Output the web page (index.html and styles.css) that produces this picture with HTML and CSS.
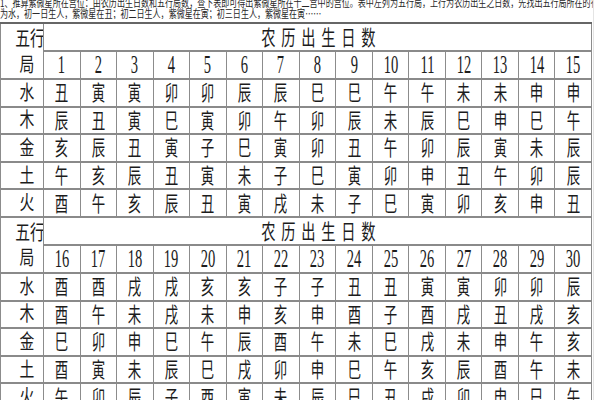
FILE: index.html
```html
<!DOCTYPE html>
<html lang="zh-CN">
<head>
<meta charset="utf-8">
<title>紫微星所在宫位表</title>
<link rel="stylesheet" href="styles.css">
</head>
<body>
<div class="page">
  <div class="note">
    <div class="note-inner">
      <div class="note-line">1、推算紫微星所在宫位：由农历出生日数和五行局数，查下表即可得出紫微星所在十二宫中的宫位。表中左列为五行局，上行为农历出生之日数，先找出五行局所在的行，再对照出生日数所在的列，例如五行局</div>
      <div class="note-line">为水，初一日生人，紫微星在丑；初二日生人，紫微星在寅；初三日生人，紫微星在寅……</div>
    </div>
  </div>
  <table class="grid">
    <colgroup>
      <col class="col-lbl">
      <col><col><col><col><col><col><col><col><col><col><col><col><col><col><col>
    </colgroup>
    <tbody>
      <tr class="head"><th class="lbl"><span class="lt">五行</span></th><th class="title" colspan="15"><span class="tt">农历出生日数</span></th></tr>
      <tr class="nums"><th class="lbl sub"><span class="lt">局</span></th><td><span class="n">1</span></td><td><span class="n">2</span></td><td><span class="n">3</span></td><td><span class="n">4</span></td><td><span class="n">5</span></td><td><span class="n">6</span></td><td><span class="n">7</span></td><td><span class="n">8</span></td><td><span class="n">9</span></td><td><span class="n">10</span></td><td><span class="n">11</span></td><td><span class="n">12</span></td><td><span class="n">13</span></td><td><span class="n">14</span></td><td><span class="n">15</span></td></tr>
      <tr class="row"><th class="lbl"><span class="lt">水</span></th><td><span class="c">丑</span></td><td><span class="c">寅</span></td><td><span class="c">寅</span></td><td><span class="c">卯</span></td><td><span class="c">卯</span></td><td><span class="c">辰</span></td><td><span class="c">辰</span></td><td><span class="c">巳</span></td><td><span class="c">巳</span></td><td><span class="c">午</span></td><td><span class="c">午</span></td><td><span class="c">未</span></td><td><span class="c">未</span></td><td><span class="c">申</span></td><td><span class="c">申</span></td></tr>
      <tr class="row"><th class="lbl"><span class="lt">木</span></th><td><span class="c">辰</span></td><td><span class="c">丑</span></td><td><span class="c">寅</span></td><td><span class="c">巳</span></td><td><span class="c">寅</span></td><td><span class="c">卯</span></td><td><span class="c">午</span></td><td><span class="c">卯</span></td><td><span class="c">辰</span></td><td><span class="c">未</span></td><td><span class="c">辰</span></td><td><span class="c">巳</span></td><td><span class="c">申</span></td><td><span class="c">巳</span></td><td><span class="c">午</span></td></tr>
      <tr class="row"><th class="lbl"><span class="lt">金</span></th><td><span class="c">亥</span></td><td><span class="c">辰</span></td><td><span class="c">丑</span></td><td><span class="c">寅</span></td><td><span class="c">子</span></td><td><span class="c">巳</span></td><td><span class="c">寅</span></td><td><span class="c">卯</span></td><td><span class="c">丑</span></td><td><span class="c">午</span></td><td><span class="c">卯</span></td><td><span class="c">辰</span></td><td><span class="c">寅</span></td><td><span class="c">未</span></td><td><span class="c">辰</span></td></tr>
      <tr class="row"><th class="lbl"><span class="lt">土</span></th><td><span class="c">午</span></td><td><span class="c">亥</span></td><td><span class="c">辰</span></td><td><span class="c">丑</span></td><td><span class="c">寅</span></td><td><span class="c">未</span></td><td><span class="c">子</span></td><td><span class="c">巳</span></td><td><span class="c">寅</span></td><td><span class="c">卯</span></td><td><span class="c">申</span></td><td><span class="c">丑</span></td><td><span class="c">午</span></td><td><span class="c">卯</span></td><td><span class="c">辰</span></td></tr>
      <tr class="row"><th class="lbl"><span class="lt">火</span></th><td><span class="c">酉</span></td><td><span class="c">午</span></td><td><span class="c">亥</span></td><td><span class="c">辰</span></td><td><span class="c">丑</span></td><td><span class="c">寅</span></td><td><span class="c">戌</span></td><td><span class="c">未</span></td><td><span class="c">子</span></td><td><span class="c">巳</span></td><td><span class="c">寅</span></td><td><span class="c">卯</span></td><td><span class="c">亥</span></td><td><span class="c">申</span></td><td><span class="c">丑</span></td></tr>

      <tr class="head"><th class="lbl"><span class="lt">五行</span></th><th class="title" colspan="15"><span class="tt">农历出生日数</span></th></tr>
      <tr class="nums"><th class="lbl sub"><span class="lt">局</span></th><td><span class="n">16</span></td><td><span class="n">17</span></td><td><span class="n">18</span></td><td><span class="n">19</span></td><td><span class="n">20</span></td><td><span class="n">21</span></td><td><span class="n">22</span></td><td><span class="n">23</span></td><td><span class="n">24</span></td><td><span class="n">25</span></td><td><span class="n">26</span></td><td><span class="n">27</span></td><td><span class="n">28</span></td><td><span class="n">29</span></td><td><span class="n">30</span></td></tr>
      <tr class="row"><th class="lbl"><span class="lt">水</span></th><td><span class="c">酉</span></td><td><span class="c">酉</span></td><td><span class="c">戌</span></td><td><span class="c">戌</span></td><td><span class="c">亥</span></td><td><span class="c">亥</span></td><td><span class="c">子</span></td><td><span class="c">子</span></td><td><span class="c">丑</span></td><td><span class="c">丑</span></td><td><span class="c">寅</span></td><td><span class="c">寅</span></td><td><span class="c">卯</span></td><td><span class="c">卯</span></td><td><span class="c">辰</span></td></tr>
      <tr class="row"><th class="lbl"><span class="lt">木</span></th><td><span class="c">酉</span></td><td><span class="c">午</span></td><td><span class="c">未</span></td><td><span class="c">戌</span></td><td><span class="c">未</span></td><td><span class="c">申</span></td><td><span class="c">亥</span></td><td><span class="c">申</span></td><td><span class="c">酉</span></td><td><span class="c">子</span></td><td><span class="c">酉</span></td><td><span class="c">戌</span></td><td><span class="c">丑</span></td><td><span class="c">戌</span></td><td><span class="c">亥</span></td></tr>
      <tr class="row"><th class="lbl"><span class="lt">金</span></th><td><span class="c">巳</span></td><td><span class="c">卯</span></td><td><span class="c">申</span></td><td><span class="c">巳</span></td><td><span class="c">午</span></td><td><span class="c">辰</span></td><td><span class="c">酉</span></td><td><span class="c">午</span></td><td><span class="c">未</span></td><td><span class="c">巳</span></td><td><span class="c">戌</span></td><td><span class="c">未</span></td><td><span class="c">申</span></td><td><span class="c">午</span></td><td><span class="c">亥</span></td></tr>
      <tr class="row"><th class="lbl"><span class="lt">土</span></th><td><span class="c">酉</span></td><td><span class="c">寅</span></td><td><span class="c">未</span></td><td><span class="c">辰</span></td><td><span class="c">巳</span></td><td><span class="c">戌</span></td><td><span class="c">卯</span></td><td><span class="c">申</span></td><td><span class="c">巳</span></td><td><span class="c">午</span></td><td><span class="c">亥</span></td><td><span class="c">辰</span></td><td><span class="c">酉</span></td><td><span class="c">午</span></td><td><span class="c">未</span></td></tr>
      <tr class="row"><th class="lbl"><span class="lt">火</span></th><td><span class="c">午</span></td><td><span class="c">卯</span></td><td><span class="c">辰</span></td><td><span class="c">子</span></td><td><span class="c">酉</span></td><td><span class="c">寅</span></td><td><span class="c">未</span></td><td><span class="c">辰</span></td><td><span class="c">巳</span></td><td><span class="c">丑</span></td><td><span class="c">戌</span></td><td><span class="c">卯</span></td><td><span class="c">申</span></td><td><span class="c">巳</span></td><td><span class="c">午</span></td></tr>
    </tbody>
  </table>
</div>
</body>
</html>
```

FILE: styles.css
```css
html, body {
  margin: 0;
  padding: 0;
  background: #ffffff;
  overflow: hidden;
}

body {
  font-family: "Liberation Serif", "Noto Sans CJK SC", serif;
  color: #1c1c1c;
}

.page {
  width: 593px;
  height: 400px;
  border-right: 1px solid #e4e4e4;
  overflow: hidden;
}

.note {
  height: 22px;
  overflow: hidden;
  font-family: "Noto Sans CJK SC", sans-serif;
  font-size: 11px;
  line-height: 11px;
  color: #262626;
}

.note-inner {
  width: 137%;
  margin-top: -3px;
  transform: scaleX(0.73);
  transform-origin: 0 0;
}

.note-line {
  white-space: nowrap;
  overflow: hidden;
}

.grid {
  width: 592px;
  border-collapse: collapse;
  table-layout: fixed;
  border-top: 2px solid #666666;
}

.col-lbl {
  width: 43px;
}

.grid th,
.grid td {
  padding: 0;
  text-align: center;
  vertical-align: middle;
  font-weight: normal;
  border-left: 1px solid #8c8c8c;
  border-right: 1px solid #8c8c8c;
  border-top: 2px solid #8a8a8a;
  border-bottom: 2px solid #8a8a8a;
  overflow: hidden;
  white-space: nowrap;
}

.grid tr:first-child th {
  border-top: 2px solid #666666;
}

.head {
  height: 28px;
}

.head th {
  vertical-align: bottom;
  padding-bottom: 1px;
}

.grid .head .lbl {
  border-bottom: 0;
}

.grid .nums .sub {
  border-top: 0;
}

.nums {
  height: 26px;
}

.row {
  height: 27.6px;
}

.grid .lbl {
  padding-left: 9px;
}

.lt {
  display: inline-block;
  font-family: "Noto Sans CJK SC", sans-serif;
  font-size: 20px;
  line-height: 1;
  transform: scaleX(0.74);
}

.tt {
  display: inline-block;
  font-family: "Noto Sans CJK SC", sans-serif;
  font-size: 21px;
  line-height: 1;
  letter-spacing: 8.4px;
  margin-right: -8.4px;
  transform: scaleX(0.68);
}

.c {
  display: inline-block;
  font-family: "Noto Sans CJK SC", sans-serif;
  font-size: 21px;
  line-height: 1;
  transform: scaleX(0.64);
}

.n {
  display: inline-block;
  font-family: "Liberation Serif", serif;
  font-size: 26px;
  line-height: 1;
  transform: scaleX(0.56);
}
```
